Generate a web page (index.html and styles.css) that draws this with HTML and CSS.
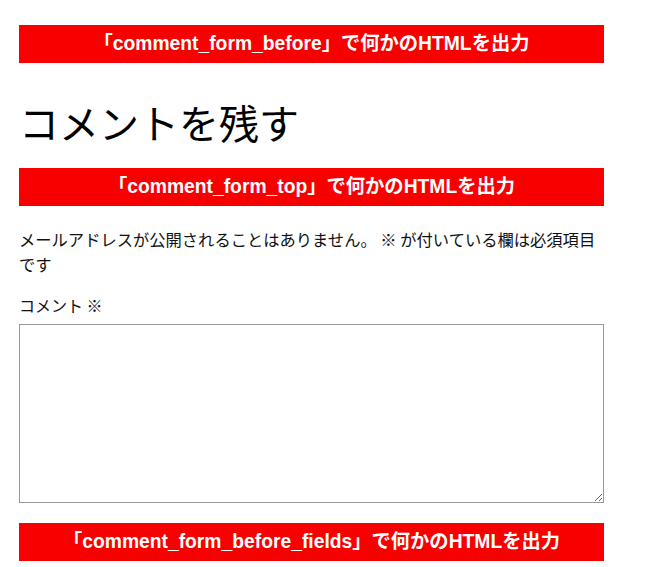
FILE: index.html
```html
<!DOCTYPE html>
<html lang="ja">
<head>
<meta charset="utf-8">
<title>コメントを残す</title>
<link rel="stylesheet" href="styles.css">
</head>
<body>
<div class="respond">
  <div class="hook">「comment_form_before」で何かのHTMLを出力</div>
  <h3 class="reply-title">コメントを残す</h3>
  <form class="comment-form">
    <div class="hook">「comment_form_top」で何かのHTMLを出力</div>
    <p class="notes">メールアドレスが公開されることはありません。 ※ が付いている欄は必須項目です</p>
    <p class="field">
      <label class="field-label" for="comment">コメント ※</label>
      <textarea id="comment" class="field-input"></textarea>
    </p>
    <div class="hook">「comment_form_before_fields」で何かのHTMLを出力</div>
  </form>
</div>
</body>
</html>
```
FILE: styles.css
```css
html, body {
  margin: 0;
  padding: 0;
  background: #fff;
}

body {
  font-family: "Noto Sans CJK JP", "Noto Sans", sans-serif;
  color: #111;
}

.respond {
  width: 585px;
  padding: 25px 0 0 19px;
}

.hook {
  background: #f80000;
  color: #fff;
  font-family: "Liberation Sans", "Noto Sans CJK JP", sans-serif;
  font-weight: bold;
  font-size: 19.3px;
  line-height: 38px;
  height: 38px;
  text-align: center;
}

.reply-title {
  margin: 0;
  padding: 29px 0 16px;
  font-size: 40px;
  font-weight: normal;
  line-height: 60px;
  color: #000;
}

.comment-form {
  display: flex;
  flex-direction: column;
}

.notes {
  margin: 0;
  padding: 21px 0 0;
  font-size: 16.3px;
  line-height: 25px;
}

.field {
  margin: 17px 0 0;
  display: flex;
  flex-direction: column;
}

.field-label {
  font-size: 16px;
  line-height: 22px;
  margin-bottom: 8px;
}

.field-input {
  box-sizing: border-box;
  width: 585px;
  height: 179px;
  margin: 0;
  border: 1px solid #999;
  resize: vertical;
}

.comment-form > .hook:last-child {
  margin-top: 20px;
}
```
